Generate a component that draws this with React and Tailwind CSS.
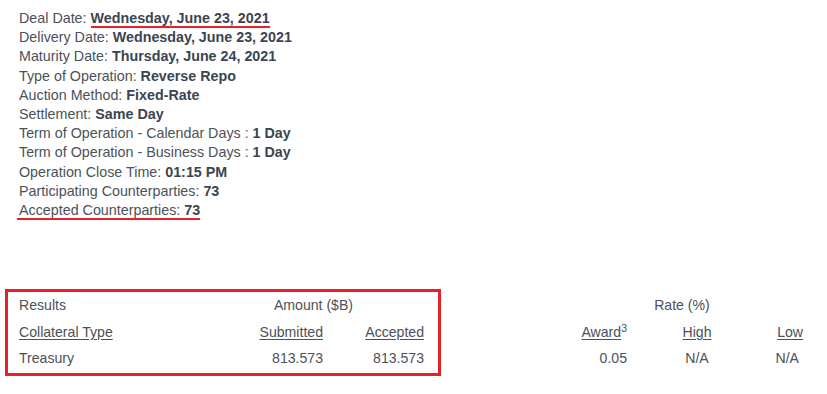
import React from "react";

const info = [
  ["Deal Date: ", "Wednesday, June 23, 2021", "valueRed"],
  ["Delivery Date: ", "Wednesday, June 23, 2021"],
  ["Maturity Date: ", "Thursday, June 24, 2021"],
  ["Type of Operation: ", "Reverse Repo"],
  ["Auction Method: ", "Fixed-Rate"],
  ["Settlement: ", "Same Day"],
  ["Term of Operation - Calendar Days : ", "1 Day"],
  ["Term of Operation - Business Days : ", "1 Day"],
  ["Operation Close Time: ", "01:15 PM"],
  ["Participating Counterparties: ", "73"],
  ["Accepted Counterparties: ", "73", "allRed"],
];

export default function App() {
  return (
    <div
      className="relative w-[827px] h-[394px] bg-white text-[14px] text-[#4b5158]"
      style={{ fontFamily: '"Liberation Sans", Arial, sans-serif' }}
    >
      <div className="pl-[19px] pt-[9px] leading-[19.2px] text-[14.3px]">
        {info.map(([label, value, mark], i) => (
          <div key={i}>
            <span className={mark === "allRed" ? "relative" : ""}>
              {label}
              <span className={"font-bold text-[#3b4550] " + (mark === "valueRed" ? "relative" : "")}>
                {value}
                {mark === "valueRed" && (
                  <span className="absolute left-0 right-0 top-[16px] h-[2px] bg-[#e8202a]" />
                )}
              </span>
              {mark === "allRed" && (
                <span className="absolute left-[-2px] right-0 top-[16px] h-[2px] bg-[#e8202a]" />
              )}
            </span>
          </div>
        ))}
      </div>

      <div className="relative mt-[72px] pl-[19px] text-[14.1px]">
        <div className="grid grid-cols-[184px_120px_101px_127px_76px_140px_46px] leading-[26.5px]">
          <div className="text-left">Results</div>
          <div className="col-span-2 text-center">Amount ($B)</div>
          <div />
          <div className="col-span-3 text-center">Rate (%)</div>

          <div className="text-left"><span className="underline underline-offset-[2px]">Collateral Type</span></div>
          <div className="text-right"><span className="underline underline-offset-[2px]">Submitted</span></div>
          <div className="text-right"><span className="underline underline-offset-[2px]">Accepted</span></div>
          <div />
          <div className="text-right">
            <span className="underline underline-offset-[2px]">Award</span>
            <sup className="text-[10.5px] align-baseline relative top-[-5px]">3</sup>
          </div>
          <div className="text-center"><span className="underline underline-offset-[2px]">High</span></div>
          <div className="text-right pr-[10px]"><span className="underline underline-offset-[2px]">Low</span></div>

          <div className="text-left">Treasury</div>
          <div className="text-right">813.573</div>
          <div className="text-right">813.573</div>
          <div />
          <div className="text-right">0.05</div>
          <div className="text-center">N/A</div>
          <div className="text-right pr-[14px]">N/A</div>
        </div>
        <div className="absolute left-[5px] top-[-3px] w-[436px] h-[87px] border-[3px] border-[#e8202a] pointer-events-none" />
      </div>
    </div>
  );
}
